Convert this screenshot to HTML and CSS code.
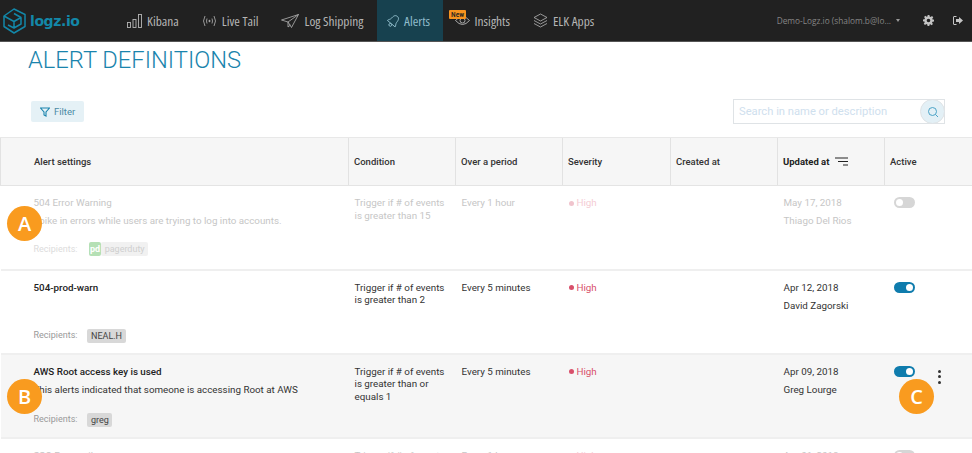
FILE: index.html
```html
<!DOCTYPE html>
<html lang="en">
<head>
  <meta charset="UTF-8" />
  <title>Alert Definitions</title>
  <link rel="stylesheet" href="styles.css">
</head>
<body>
  <nav class="topbar">
    <a class="logo">
      <svg width="24" height="26" viewBox="0 0 24 26" fill="none" stroke="#1387a8" stroke-width="1.5" stroke-linejoin="round">
        <path d="M11 1 L22 6.5 V18.5 L11 25 L1 18.5 V8 L11 1 Z" />
        <path d="M1 8 L11 13.5 L18 9.5 L11 5.5 M11 13.5 V20 L18 16 V9.5 M5 17 L11 20" />
      </svg>
      <span class="logo-text">logz.io</span>
    </a>
    <ul class="nav-items">
      <li class="nav-item kibana">
        <svg width="15" height="14" viewBox="0 0 15 14" fill="none" stroke="#b5b5b5" stroke-width="0.9"><rect x="0.5" y="8.5" width="3" height="5"/><rect x="6" y="5.5" width="3" height="8"/><rect x="11.5" y="0.5" width="3" height="13"/></svg>
        Kibana
      </li>
      <li class="nav-item tail">
        <svg width="15" height="12" viewBox="0 0 15 12" fill="none" stroke="#b5b5b5" stroke-width="0.8"><path d="M3 1 Q0 6 3 11 M12 1 Q15 6 12 11 M5 3.5 Q4 6 5 8.5 M10 3.5 Q11 6 10 8.5"/><circle cx="7.5" cy="6" r="0.7" fill="#b5b5b5"/></svg>
        Live Tail
      </li>
      <li class="nav-item ship">
        <svg width="18" height="14" viewBox="0 0 18 14" fill="none" stroke="#b5b5b5" stroke-width="0.8"><path d="M0.5 6 L17.5 0.5 L10.5 13.5 L7 8 Z M7 8 L17.5 0.5 M7 8 L7 13 L9.5 11"/></svg>
        Log Shipping
      </li>
      <li class="nav-item active">
        <svg width="13" height="14" viewBox="0 0 13 14" fill="none" stroke="#8fbccb" stroke-width="0.9"><g transform="rotate(40 6.5 7)"><path d="M6.5 1 C3.5 1 3.2 4 3.2 6 C3.2 8 1.5 9 1.5 10.5 H11.5 C11.5 9 9.8 8 9.8 6 C9.8 4 9.5 1 6.5 1 Z"/><circle cx="6.5" cy="12" r="1.4"/></g></svg>
        Alerts
      </li>
      <li class="nav-item insights">
        <span class="new-tag">New</span>
        <svg width="15" height="11" viewBox="0 0 15 11" fill="none" stroke="#b5b5b5" stroke-width="0.9"><path d="M0.5 5.5 Q7.5 -2.5 14.5 5.5 Q7.5 13.5 0.5 5.5 Z"/><circle cx="7.5" cy="5.5" r="2.5"/></svg>
        Insights
      </li>
      <li class="nav-item apps">
        <svg width="15" height="15" viewBox="0 0 15 15" fill="none" stroke="#b5b5b5" stroke-width="0.8"><path d="M7.5 1 L14 4.5 L7.5 8 L1 4.5 Z M1 7.5 L7.5 11 L14 7.5 M1 10.5 L7.5 14 L14 10.5"/></svg>
        ELK Apps
      </li>
    </ul>
    <div class="account">Demo-Logz.io (shalom.b@lo... <span class="caret"></span></div>
    <svg class="gear" width="11" height="11" viewBox="0 0 24 24" fill="#c4c4c4"><path d="M10 0h4l.6 3.4 2.2.9 2.8-2 2.8 2.8-2 2.8.9 2.2L24 10v4l-3.4.6-.9 2.2 2 2.8-2.8 2.8-2.8-2-2.2.9L14 24h-4l-.6-3.4-2.2-.9-2.8 2-2.8-2.8 2-2.8-.9-2.2L0 14v-4l3.4-.6.9-2.2-2-2.8 2.8-2.8 2.8 2 2.2-.9z M12 8a4 4 0 1 0 0 8 4 4 0 0 0 0-8z" fill-rule="evenodd"/></svg>
    <svg class="logout" width="10" height="9" viewBox="0 0 10 9" fill="#c4c4c4"><path d="M6 1 L10 4.5 L6 8 V6 H3 V3 H6 Z"/><path d="M3.5 0.5 H1 Q0.5 0.5 0.5 1 V8 Q0.5 8.5 1 8.5 H3.5" fill="none" stroke="#c4c4c4"/></svg>
  </nav>

  <main>
    <h1 class="page-title">ALERT DEFINITIONS</h1>
    <div class="toolbar">
      <button class="filter-btn">
        <svg width="10" height="10" viewBox="0 0 10 10" fill="none" stroke="#1a84ad" stroke-width="1.1"><path d="M0.5 1 H9.5 L6 5 V9 L4 8 V5 Z"/></svg>
        Filter
      </button>
      <div class="search">
        <span class="search-text">Search in name or description</span>
        <span class="search-btn">
          <svg width="12" height="12" viewBox="0 0 12 12" fill="none" stroke="#4aa3c7"><circle cx="5.5" cy="5.5" r="4"/><path d="M8.5 8.5 L11 11"/></svg>
        </span>
      </div>
    </div>

    <table class="alerts">
      <thead>
        <tr>
          <th class="col-settings">Alert settings</th>
          <th class="col-condition">Condition</th>
          <th class="col-period">Over a period</th>
          <th class="col-severity">Severity</th>
          <th class="col-created">Created at</th>
          <th class="col-updated sorted">Updated at
            <svg width="13" height="9" viewBox="0 0 13 9" stroke="#222" stroke-width="1.2"><path d="M0 1 H13 M3 4.5 H13 M8 8 H13"/></svg>
          </th>
          <th class="col-active">Active</th>
        </tr>
      </thead>
      <tbody>
        <tr class="disabled">
          <td class="settings">
            <div class="alert-name">504 Error Warning</div>
            <div class="alert-desc">Spike in errors while users are trying to log into accounts.</div>
            <div class="recipients">Recipients: <span class="pd-icon">pd</span><span class="tag tag-pd">pagerduty</span></div>
          </td>
          <td>Trigger if # of events is greater than 15</td>
          <td>Every 1 hour</td>
          <td><span class="severity">High</span></td>
          <td></td>
          <td><div class="date">May 17, 2018</div><div>Thiago Del Rios</div></td>
          <td><span class="toggle"></span></td>
        </tr>
        <tr>
          <td class="settings">
            <div class="alert-name">504-prod-warn</div>
            <div class="alert-desc"></div>
            <div class="recipients">Recipients: <span class="tag">NEAL.H</span></div>
          </td>
          <td>Trigger if # of events is greater than 2</td>
          <td>Every 5 minutes</td>
          <td><span class="severity">High</span></td>
          <td></td>
          <td><div class="date">Apr 12, 2018</div><div>David Zagorski</div></td>
          <td><span class="toggle on"></span></td>
        </tr>
        <tr class="hovered">
          <td class="settings">
            <div class="alert-name">AWS Root access key is used</div>
            <div class="alert-desc">This alerts indicated that someone is accessing Root at AWS</div>
            <div class="recipients">Recipients: <span class="tag">greg</span></div>
          </td>
          <td>Trigger if # of events is greater than or equals 1</td>
          <td>Every 5 minutes</td>
          <td><span class="severity">High</span></td>
          <td></td>
          <td><div class="date">Apr 09, 2018</div><div>Greg Lourge</div></td>
          <td class="active-cell">
            <span class="toggle on"></span>
            <span class="kebab"><i></i><i></i><i></i></span>
          </td>
        </tr>
        <tr class="disabled">
          <td class="settings">
            <div class="alert-name">SSO Error spike</div>
          </td>
          <td>Trigger if # of events</td>
          <td>Every 1 hour</td>
          <td><span class="severity">High</span></td>
          <td></td>
          <td><div class="date">Apr 01, 2018</div></td>
          <td><span class="toggle"></span></td>
        </tr>
      </tbody>
    </table>
  </main>

  <span class="callout callout-a">A</span>
  <span class="callout callout-b">B</span>
  <span class="callout callout-c">C</span>
</body>
</html>
```

FILE: styles.css
```css
html, body {
  height: 100%;
}

body {
  margin: 0;
  overflow: hidden;
  background-color: #fff;
  font-family: Roboto, "Liberation Sans", sans-serif;
  font-size: 9.8px;
  color: #333;
}

/* top bar */
.topbar {
  display: flex;
  align-items: center;
  height: 41px;
  border-bottom: 1px solid #555;
  background-color: #212121;
  color: #b5b5b5;
}

.logo {
  display: flex;
  align-items: center;
  gap: 3px;
  width: 115.5px;
  padding-left: 3px;
  box-sizing: border-box;
}

.logo-text {
  font-family: "DejaVu Sans", sans-serif;
  font-size: 14px;
  font-weight: 700;
  color: #1387a8;
  letter-spacing: -0.4px;
}

.nav-items {
  display: flex;
  align-items: stretch;
  height: 41px;
  margin: 0;
  padding: 0;
  list-style: none;
  flex: 1;
}

.nav-item {
  position: relative;
  display: flex;
  align-items: center;
  gap: 5px;
  padding: 0 11.5px;
  font-family: "Open Sans", sans-serif;
  font-size: 13.4px;
  font-stretch: condensed;
}

.nav-item.active {
  gap: 4px;
  margin-left: 2px;
  padding: 0 13px 0 10px;
  background-color: #17414f;
  color: #8fbccb;
}

.new-tag {
  position: absolute;
  top: 10px;
  left: 6px;
  width: 17px;
  border-radius: 1px;
  background-color: #f7931e;
  color: #222;
  font-family: Roboto, sans-serif;
  font-size: 7.5px;
  font-weight: 500;
  line-height: 9px;
  text-align: center;
}

.account {
  display: flex;
  align-items: center;
  gap: 5px;
  margin-right: 23px;
  font-family: "Open Sans", sans-serif;
  font-size: 8.3px;
  color: #858585;
}

.caret {
  width: 0;
  height: 0;
  border-left: 2.5px solid transparent;
  border-right: 2.5px solid transparent;
  border-top: 3px solid #999;
}

.gear {
  margin-right: 19px;
}

.logout {
  margin-right: 9px;
}

/* heading + toolbar */
.page-title {
  margin: 4px 0 0 28px;
  font-size: 23.7px;
  font-weight: 300;
  line-height: 28px;
  color: #1a84ad;
}

.toolbar {
  display: flex;
  align-items: center;
  justify-content: space-between;
  margin-top: 25px;
  padding: 0 27px 0 31px;
}

.filter-btn {
  display: flex;
  align-items: center;
  gap: 4px;
  width: 53px;
  height: 21px;
  padding: 0 0 0 9px;
  border: none;
  border-radius: 2px;
  background-color: #e5f1f6;
  color: #4a8aa5;
  font-family: Roboto, sans-serif;
  font-size: 9.5px;
}

.search {
  display: flex;
  align-items: center;
  justify-content: space-between;
  width: 212px;
  height: 25px;
  box-sizing: border-box;
  border: 1px solid #dfe3e6;
  padding-left: 5px;
}

.search-text {
  font-size: 11.2px;
  color: #cfe0ee;
}

.search-btn {
  display: flex;
  align-items: center;
  justify-content: center;
  width: 25px;
  height: 25px;
  margin-right: -1px;
  border-radius: 50%;
  border: 1px solid #dfe3e6;
  box-sizing: border-box;
  background-color: #e3f0f6;
}

/* table */
.alerts {
  width: 100%;
  margin-top: 13px;
  border-collapse: collapse;
  table-layout: fixed;
}

.alerts th {
  height: 48px;
  padding: 0 5px;
  box-sizing: border-box;
  border-top: 1px solid #e8e8e8;
  border-bottom: 1px solid #e4e4e4;
  border-left: 1px solid #e2e2e2;
  background-color: #f6f6f6;
  font-size: 9.5px;
  font-weight: 500;
  text-align: left;
  color: #333;
}

.alerts th.sorted {
  font-weight: 700;
  color: #222;
}

.sorted svg {
  margin-left: 3px;
  vertical-align: -1px;
}

.col-settings { width: 348px; }
.col-condition { width: 107px; }
.col-period { width: 107px; }
.col-severity { width: 108px; }
.col-created { width: 107px; }
.col-updated { width: 107px; }

.alerts th.col-settings {
  padding-left: 33px;
}

.alerts td {
  height: 84px;
  padding: 11px 6px 0;
  border-bottom: 2px solid #efefef;
  box-sizing: border-box;
  vertical-align: top;
  line-height: 12.5px;
}

.alerts td.settings {
  padding-left: 33px;
}

.hovered td {
  background-color: #f6f6f6;
}

.disabled td {
  color: #c6c6c6;
}

.alert-name {
  font-weight: 500;
  color: #222;
}

.disabled .alert-name {
  font-weight: 400;
  color: #c6c6c6;
}

.alert-desc {
  height: 12.5px;
  margin-top: 5.5px;
}

.recipients {
  display: flex;
  align-items: center;
  gap: 10px;
  margin-top: 16.5px;
  font-size: 9px;
  color: #999;
}

.disabled .recipients {
  margin-top: 14.5px;
  color: #dcdcdc;
}

.tag {
  padding: 0 3.5px;
  border-radius: 2px;
  background-color: #d8d8d8;
  line-height: 14px;
  color: #444;
}

.tag-pd {
  margin-left: -10px;
  background-color: #f1f1f1;
  color: #cfcfcf;
}

.pd-icon {
  margin-left: 1.5px;
  padding: 0 1px;
  border-radius: 2px;
  background-color: #b5e0b5;
  line-height: 14px;
  color: #fff;
  font-weight: 700;
}

.date {
  margin-bottom: 5.5px;
}

.severity {
  display: flex;
  align-items: center;
  gap: 3px;
  color: #d8506b;
}

.severity::before {
  content: "";
  width: 5px;
  height: 5px;
  border-radius: 50%;
  background-color: #d8506b;
}

.disabled .severity {
  color: #f4ccd4;
}

.disabled .severity::before {
  background-color: #f0c4cd;
}

.toggle {
  display: block;
  position: relative;
  width: 21px;
  height: 11px;
  margin-left: 3px;
  border-radius: 6px;
  background-color: #d6d6d6;
}

.toggle::after {
  content: "";
  position: absolute;
  top: 2px;
  left: 2px;
  width: 7px;
  height: 7px;
  border-radius: 50%;
  background-color: #fff;
}

.toggle.on {
  background-color: #0f7cad;
}

.toggle.on::after {
  left: 12px;
}

.active-cell {
  position: relative;
}

.kebab {
  position: absolute;
  top: 15px;
  right: 31px;
  display: flex;
  flex-direction: column;
  gap: 2.5px;
}

.kebab i {
  width: 3px;
  height: 3px;
  border-radius: 50%;
  background-color: #333;
}

/* orange letter markers laid over the screenshot */
.callout {
  position: absolute;
  display: flex;
  align-items: center;
  justify-content: center;
  width: 35px;
  height: 35px;
  border-radius: 50%;
  background-color: #f99b1f;
  color: #fff;
  font-family: "Open Sans", sans-serif;
  font-size: 20px;
  font-weight: 600;
}

.callout-a { left: 7px; top: 206px; }
.callout-b { left: 7px; top: 379px; }
.callout-c { left: 899px; top: 379px; }
```
